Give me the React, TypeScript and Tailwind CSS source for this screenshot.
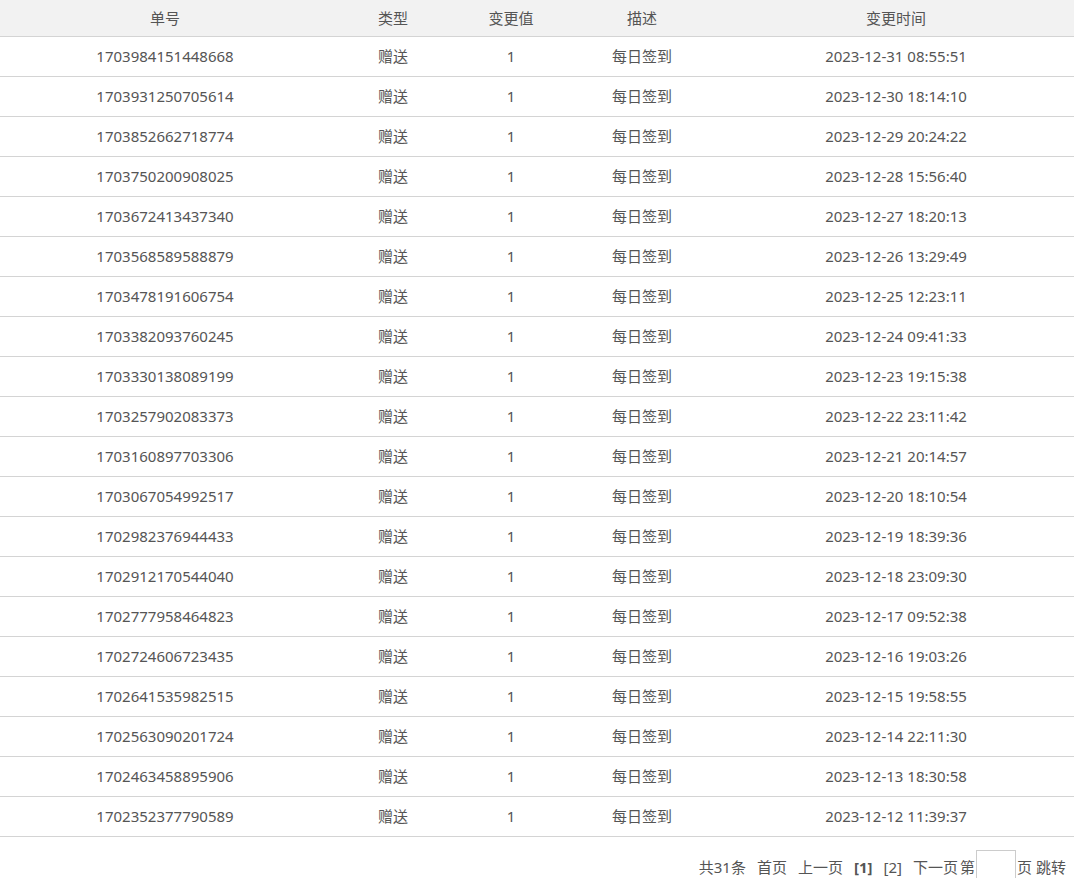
const rows: [string, string][] = [
["1703984151448668","2023-12-31 08:55:51"],["1703931250705614","2023-12-30 18:14:10"],["1703852662718774","2023-12-29 20:24:22"],["1703750200908025","2023-12-28 15:56:40"],["1703672413437340","2023-12-27 18:20:13"],["1703568589588879","2023-12-26 13:29:49"],["1703478191606754","2023-12-25 12:23:11"],["1703382093760245","2023-12-24 09:41:33"],["1703330138089199","2023-12-23 19:15:38"],["1703257902083373","2023-12-22 23:11:42"],["1703160897703306","2023-12-21 20:14:57"],["1703067054992517","2023-12-20 18:10:54"],["1702982376944433","2023-12-19 18:39:36"],["1702912170544040","2023-12-18 23:09:30"],["1702777958464823","2023-12-17 09:52:38"],["1702724606723435","2023-12-16 19:03:26"],["1702641535982515","2023-12-15 19:58:55"],["1702563090201724","2023-12-14 22:11:30"],["1702463458895906","2023-12-13 18:30:58"],["1702352377790589","2023-12-12 11:39:37"]];
const cols = "grid grid-cols-[330px_126px_110px_152px_1fr] text-center items-center";
export default function App() {
  return (
    <div className="w-[1074px] h-[878px] overflow-hidden bg-white text-[#555] text-[15px]" style={{fontFamily:'"Noto Sans","Noto Sans CJK SC",sans-serif'}}>
      <div className={`${cols} h-[37px] bg-[#f2f2f2] border-b border-[#d4d4d4]`}>
        <div>单号</div><div>类型</div><div>变更值</div><div>描述</div><div>变更时间</div>
      </div>
      {rows.map(([id,t]) => (
        <div key={id} className={`${cols} h-[40px] border-b border-[#d4d4d4]`}>
          <div>{id}</div><div>赠送</div><div>1</div><div>每日签到</div><div>{t}</div>
        </div>
      ))}
      <div className="flex justify-end items-center pr-[8px] mt-[13px] h-[34px] gap-[0px]">
        <span className="mr-[11px]">共31条</span>
        <span className="mr-[11px]">首页</span>
        <span className="mr-[11px]">上一页</span>
        <span className="font-bold mr-[11px]">[1]</span>
        <span className="mr-[11px]">[2]</span>
        <span className="mr-[2px]">下一页</span>
        <span>第</span>
        <span className="inline-block w-[40px] h-[34px] border border-[#ccc] mx-[1px]"></span>
        <span className="mr-[4px]">页</span>
        <span>跳转</span>
      </div>
    </div>
  );
}
